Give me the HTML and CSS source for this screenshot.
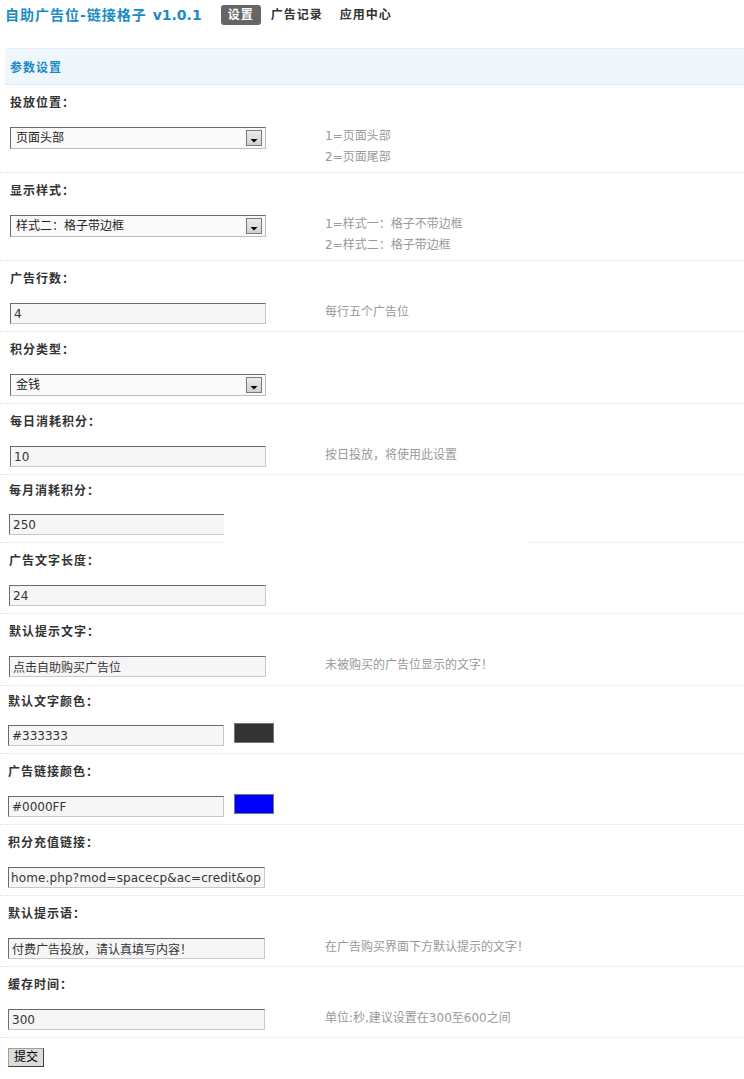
FILE: index.html
```html
<!DOCTYPE html>
<html lang="zh-CN">
<head>
<meta charset="utf-8">
<title>自助广告位-链接格子</title>
<link rel="stylesheet" href="styles.css">
</head>
<body>
<div class="top">
  <h1 class="title">自助广告位-链接格子 <span class="ver">v1.0.1</span></h1>
  <ul class="nav">
    <li class="on">设置</li>
    <li>广告记录</li>
    <li>应用中心</li>
  </ul>
</div>
<div class="bar">参数设置</div>
<form class="form">
  <div class="item p10">
    <div class="label">投放位置：</div>
    <div class="ctrl-row">
      <div class="ctrl"><div class="sel"><select><option>页面头部</option></select><span class="arrow"><svg width="14" height="14" viewBox="0 0 14 14"><path d="M3.5 8h7L7 11.5z" fill="#000"/></svg></span></div></div>
      <div class="hint">1=页面头部<br>2=页面尾部</div>
    </div>
  </div>
  <div class="item p10">
    <div class="label">显示样式：</div>
    <div class="ctrl-row">
      <div class="ctrl"><div class="sel"><select><option>样式二：格子带边框</option></select><span class="arrow"><svg width="14" height="14" viewBox="0 0 14 14"><path d="M3.5 8h7L7 11.5z" fill="#000"/></svg></span></div></div>
      <div class="hint">1=样式一：格子不带边框<br>2=样式二：格子带边框</div>
    </div>
  </div>
  <div class="item p10">
    <div class="label">广告行数：</div>
    <div class="ctrl-row">
      <div class="ctrl"><input class="txt" type="text" value="4"></div>
      <div class="hint">每行五个广告位</div>
    </div>
  </div>
  <div class="item p10">
    <div class="label">积分类型：</div>
    <div class="ctrl-row">
      <div class="ctrl"><div class="sel"><select><option>金钱</option></select><span class="arrow"><svg width="14" height="14" viewBox="0 0 14 14"><path d="M3.5 8h7L7 11.5z" fill="#000"/></svg></span></div></div>
    </div>
  </div>
  <div class="item p10">
    <div class="label">每日消耗积分：</div>
    <div class="ctrl-row">
      <div class="ctrl"><input class="txt" type="text" value="10"></div>
      <div class="hint">按日投放，将使用此设置</div>
    </div>
  </div>
  <div class="item p9 narrow cut">
    <div class="label">每月消耗积分：</div>
    <div class="ctrl-row">
      <div class="ctrl"><input class="txt w-cut" type="text" value="250"></div>
    </div>
  </div>
  <div class="item p9">
    <div class="label">广告文字长度：</div>
    <div class="ctrl-row">
      <div class="ctrl"><input class="txt w257" type="text" value="24"></div>
    </div>
  </div>
  <div class="item p9 tall">
    <div class="label">默认提示文字：</div>
    <div class="ctrl-row">
      <div class="ctrl"><input class="txt w257" type="text" value="点击自助购买广告位"></div>
      <div class="hint">未被购买的广告位显示的文字！</div>
    </div>
  </div>
  <div class="item narrow">
    <div class="label">默认文字颜色：</div>
    <div class="ctrl-row">
      <div class="ctrl color"><input class="txt w216" type="text" value="#333333"><span class="swatch" style="background:#333333"></span></div>
    </div>
  </div>
  <div class="item">
    <div class="label">广告链接颜色：</div>
    <div class="ctrl-row">
      <div class="ctrl color"><input class="txt w216" type="text" value="#0000FF"><span class="swatch" style="background:#0000FF"></span></div>
    </div>
  </div>
  <div class="item">
    <div class="label">积分充值链接：</div>
    <div class="ctrl-row">
      <div class="ctrl"><input class="txt w257 url" type="text" value="home.php?mod=spacecp&amp;ac=credit&amp;op=buy"></div>
    </div>
  </div>
  <div class="item">
    <div class="label">默认提示语：</div>
    <div class="ctrl-row">
      <div class="ctrl"><input class="txt w257" type="text" value="付费广告投放，请认真填写内容！"></div>
      <div class="hint">在广告购买界面下方默认提示的文字！</div>
    </div>
  </div>
  <div class="item">
    <div class="label">缓存时间：</div>
    <div class="ctrl-row">
      <div class="ctrl"><input class="txt w257" type="text" value="300"></div>
      <div class="hint">单位:秒,建议设置在300至600之间</div>
    </div>
  </div>
  <div class="submit-row"><button type="button" class="btn">提交</button></div>
</form>
</body>
</html>
```
FILE: styles.css
```css
html, body {
  margin: 0;
  padding: 0;
  background: #fff;
}
body {
  font-family: "DejaVu Sans", "Noto Sans CJK SC", sans-serif;
  font-size: 12px;
  color: #333;
}
.top {
  display: flex;
  align-items: center;
  height: 20px;
  padding: 5px 5px 0;
}
.title {
  margin: 0;
  font-size: 14px;
  line-height: 20px;
  font-weight: bold;
  letter-spacing: 1px;
  color: #1a8cc4;
  white-space: nowrap;
}
.title .ver {
  letter-spacing: 0;
}
.nav {
  display: flex;
  list-style: none;
  margin: 0 0 0 19px;
  padding: 0;
}
.nav li {
  height: 20px;
  line-height: 20px;
  padding: 0 7px;
  margin-right: 3px;
  font-weight: bold;
  letter-spacing: 1px;
  color: #333;
  border-radius: 3px;
}
.nav li.on {
  background: #666;
  color: #fff;
}
.bar {
  margin: 23px 0 0 5px;
  border-top: 1px solid #e3eef6;
  border-bottom: 1px dotted #cfdde8;
  background: #eff6fc;
  padding: 11px 0 8px 5px;
  line-height: 16px;
  font-weight: bold;
  letter-spacing: 1px;
  color: #1a8cc4;
}
.form {
  margin: 0;
}
.item {
  position: relative;
  padding: 10px 0 7px;
  border-bottom: 1px dotted #d6e2ea;
}
.item.narrow {
  padding-top: 8px;
}
.item.tall {
  padding-bottom: 8px;
}
.item.cut::after {
  content: "";
  position: absolute;
  left: 224px;
  width: 304px;
  bottom: -1px;
  height: 1px;
  background: #fff;
}
.label {
  line-height: 16px;
  padding-left: 8px;
  font-weight: bold;
  letter-spacing: 1px;
  color: #333;
}
.ctrl-row {
  display: flex;
  align-items: flex-start;
  margin-top: 16px;
}
.item.narrow .ctrl-row {
  margin-top: 15px;
}
.ctrl {
  box-sizing: border-box;
  width: 325px;
  flex: none;
  padding-left: 8px;
}
.p10 .label, .p10 .ctrl { padding-left: 10px; }
.p9 .label, .p9 .ctrl { padding-left: 9px; }
.ctrl.color {
  display: flex;
  align-items: flex-start;
}
.hint {
  line-height: 21px;
  margin: -1px 0 -3px;
  color: #999;
  white-space: nowrap;
}
.txt {
  display: block;
  box-sizing: border-box;
  width: 256px;
  height: 21px;
  margin: 0;
  padding: 0 3px;
  border: 1px solid;
  border-color: #6b6b6b #c8c8c8 #c8c8c8 #6b6b6b;
  background: #f6f6f6;
  font-family: "DejaVu Sans", "Noto Sans CJK SC", sans-serif;
  font-size: 12px;
  color: #333;
  outline: none;
}
.txt.w257 { width: 257px; }
.txt.w216 { width: 216px; }
.txt.w-cut {
  width: 215px;
  border-right: 0;
}
.txt.url {
  padding-left: 2px;
  letter-spacing: 0.15px;
}
.sel {
  position: relative;
  width: 256px;
  height: 22px;
}
.sel select {
  -webkit-appearance: none;
  appearance: none;
  display: block;
  box-sizing: border-box;
  width: 256px;
  height: 22px;
  margin: 0;
  padding: 0 24px 0 5px;
  border: 1px solid;
  border-color: #6b6b6b #bdbdbd #bdbdbd #6b6b6b;
  border-radius: 0;
  background: #fafafa;
  font-family: "DejaVu Sans", "Noto Sans CJK SC", sans-serif;
  font-size: 12px;
  color: #222;
  outline: none;
}
.arrow {
  position: absolute;
  right: 4px;
  top: 3px;
  box-sizing: border-box;
  width: 16px;
  height: 16px;
  border: 1px solid #7a7a7a;
  background: linear-gradient(#ececec, #cfcfcf);
  pointer-events: none;
}
.arrow svg {
  display: block;
}
.swatch {
  display: block;
  box-sizing: border-box;
  width: 40px;
  height: 20px;
  margin: -2px 0 0 10px;
  border: 1px solid #777;
}
.submit-row {
  padding: 10px 0 0 8px;
}
.btn {
  display: block;
  box-sizing: border-box;
  width: 36px;
  height: 19px;
  margin: 0;
  padding: 0;
  border: 1px solid;
  border-color: #a0a0a0 #404040 #404040 #a0a0a0;
  background: #dcdcdc;
  font-family: "DejaVu Sans", "Noto Sans CJK SC", sans-serif;
  font-size: 12px;
  line-height: 17px;
  color: #000;
}
```
